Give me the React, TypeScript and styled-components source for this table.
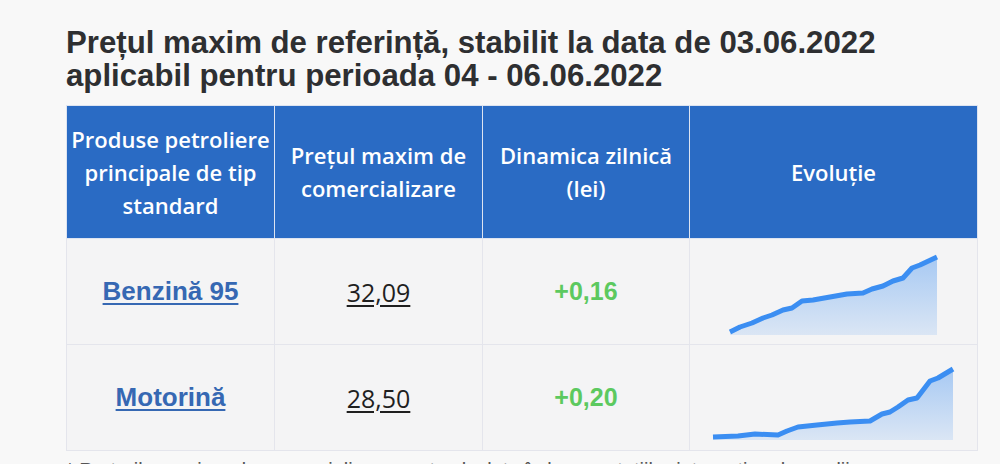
import styled, { createGlobalStyle } from 'styled-components'

// Date pentru tabelul cu prețuri
const rows = [
  {
    name: 'Benzină 95',
    price: '32,09',
    delta: '+0,16',
    baseY: 96,
    points: [
      [40, 93], [50, 88], [62, 84], [73, 79], [82, 76], [93, 71], [102, 69], [112, 62],
      [123, 61], [140, 58], [157, 55], [173, 54], [182, 50], [193, 47], [203, 42],
      [213, 39], [222, 29], [230, 26], [247, 18],
    ],
  },
  {
    name: 'Motorină',
    price: '28,50',
    delta: '+0,20',
    baseY: 95,
    points: [
      [23, 92], [48, 91], [65, 89], [88, 90], [97, 86], [108, 82], [127, 80], [147, 78],
      [160, 77], [180, 76], [192, 69], [200, 67], [208, 62], [218, 55], [227, 53],
      [240, 36], [248, 33], [263, 24],
    ],
  },
]

const headers = [
  'Produse petroliere principale de tip standard',
  'Prețul maxim de comercializare',
  'Dinamica zilnică (lei)',
  'Evoluție',
]

function Sparkline({ points, baseY, id }: { points: number[][]; baseY: number; id: string }) {
  const line = points.map((p, i) => `${i === 0 ? 'M' : 'L'}${p[0]} ${p[1]}`).join(' ')
  const first = points[0]
  const last = points[points.length - 1]
  const area = `${line} L${last[0]} ${baseY} L${first[0]} ${baseY} Z`
  return (
    <ChartSvg viewBox="0 0 287 105" preserveAspectRatio="none">
      <defs>
        <linearGradient id={id} x1="0" y1="0" x2="0" y2="1">
          <stop offset="0%" stopColor="#3d8ef0" stopOpacity="0.42" />
          <stop offset="100%" stopColor="#3d8ef0" stopOpacity="0.14" />
        </linearGradient>
      </defs>
      <path d={area} fill={`url(#${id})`} />
      <path d={line} fill="none" stroke="#3b8ef2" strokeWidth="5" strokeLinejoin="round" strokeLinecap="butt" />
    </ChartSvg>
  )
}

export default function App() {
  return (
    <>
      <GlobalStyle />
      <Page>
        <Title>
          Prețul maxim de referință, stabilit la data de 03.06.2022
          <br />
          aplicabil pentru perioada 04 - 06.06.2022
        </Title>
        <Table>
          <colgroup>
            <col style={{ width: 208 }} />
            <col style={{ width: 208 }} />
            <col style={{ width: 207 }} />
            <col style={{ width: 288 }} />
          </colgroup>
          <thead>
            <tr>
              {headers.map((h) => (
                <HeadCell key={h}>{h}</HeadCell>
              ))}
            </tr>
          </thead>
          <tbody>
            {rows.map((r, i) => (
              <tr key={r.name}>
                <Cell>
                  <ProductLink href="#">{r.name}</ProductLink>
                </Cell>
                <Cell>
                  <Price href="#">{r.price}</Price>
                </Cell>
                <Cell>
                  <Delta>{r.delta}</Delta>
                </Cell>
                <ChartCell>
                  <Sparkline points={r.points} baseY={r.baseY} id={`grad-${i}`} />
                </ChartCell>
              </tr>
            ))}
          </tbody>
        </Table>
        <Footnote>
          * Prețurile maxime de comercializare sunt calculate în baza cotațiilor internaționale medii
        </Footnote>
      </Page>
    </>
  )
}

const GlobalStyle = createGlobalStyle`
  html, body {
    margin: 0;
    padding: 0;
    background: #f8f8f8;
  }
  body {
    font-family: "Liberation Sans", Arial, sans-serif;
    overflow: hidden;
  }
`

const Page = styled.div`
  width: 911px;
  padding: 26px 0 0 66px;
`

const Title = styled.h2`
  margin: 0 0 13px;
  font-family: "Liberation Sans", Arial, sans-serif;
  font-size: 31.2px;
  font-weight: 700;
  line-height: 33px;
  color: #2e2f31;
  white-space: nowrap;
`

const Table = styled.table`
  width: 911px;
  table-layout: fixed;
  border-collapse: collapse;
  background: #f4f4f5;
`

const HeadCell = styled.th`
  height: 132px;
  padding: 0 2px;
  background: #2a6bc4;
  border: 1px solid #dde4f1;
  color: #fff;
  font-family: "Open Sans", "Noto Sans", sans-serif;
  font-size: 22px;
  font-weight: 600;
  line-height: 33px;
  text-align: center;
  vertical-align: middle;
`

const Cell = styled.td`
  height: 105px;
  padding: 0;
  border: 1px solid #e4e5ec;
  text-align: center;
  vertical-align: middle;
`

const ChartCell = styled(Cell)`
  line-height: 0;
`

const ChartSvg = styled.svg`
  display: block;
  width: 100%;
  height: 105px;
`

const ProductLink = styled.a`
  font-family: "Liberation Sans", Arial, sans-serif;
  font-size: 26px;
  font-weight: 700;
  color: #3668b3;
  text-decoration: underline;
  text-decoration-thickness: 2px;
  text-underline-offset: 3px;
`

const Price = styled.a`
  font-family: "Open Sans", "Noto Sans", sans-serif;
  font-size: 25px;
  font-weight: 400;
  color: #1f1f1f;
  text-decoration: underline;
  text-decoration-thickness: 2px;
  text-underline-offset: 3px;
`

const Delta = styled.span`
  font-family: "Liberation Sans", Arial, sans-serif;
  font-size: 25px;
  font-weight: 700;
  color: #5cc95f;
`

const Footnote = styled.p`
  margin: 8px 0 0;
  font-family: "Liberation Sans", Arial, sans-serif;
  font-size: 20px;
  color: #555;
`
